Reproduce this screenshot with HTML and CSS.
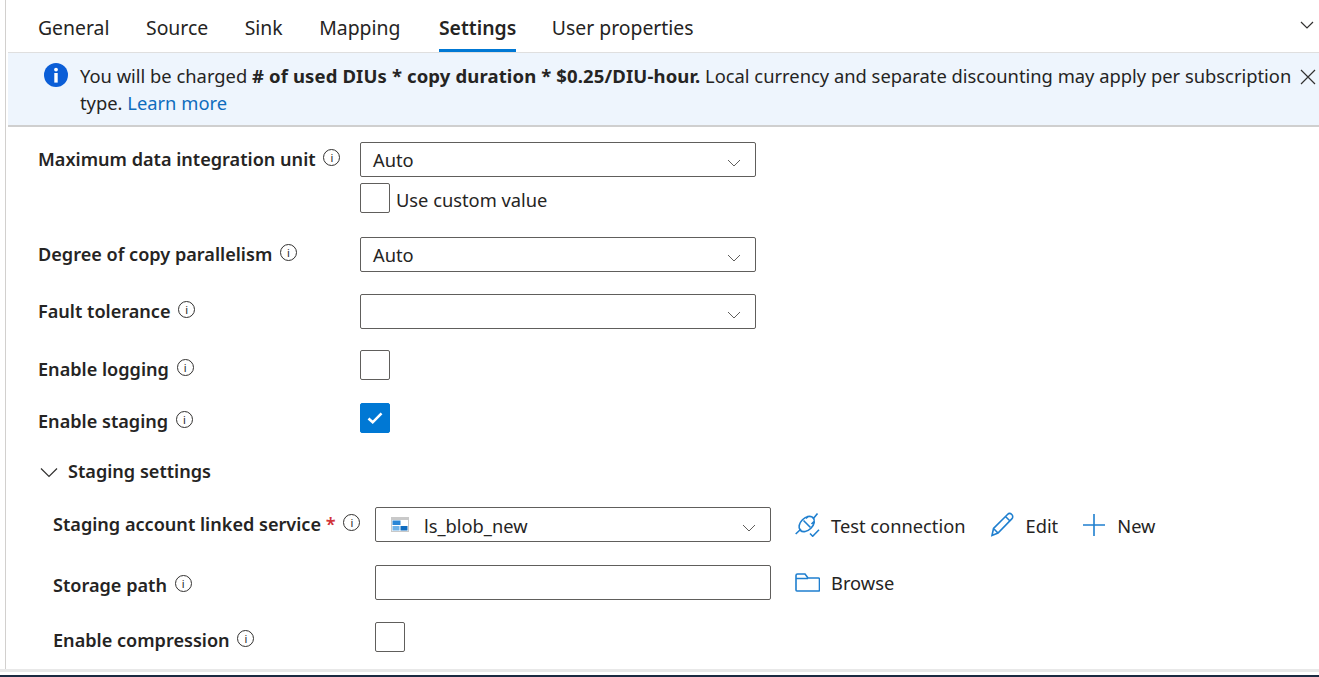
FILE: index.html
```html
<!DOCTYPE html>
<html lang="en">
<head>
    <meta charset="UTF-8">
    <title>Settings</title>
    <link rel="stylesheet" href="styles.css">
</head>
<body>
<section class="main">
    <nav class="tabs">
        <a class="tab">General</a>
        <a class="tab">Source</a>
        <a class="tab">Sink</a>
        <a class="tab">Mapping</a>
        <a class="tab active">Settings</a>
        <a class="tab">User properties</a>
        <svg class="tabs-toggle" width="16" height="10" viewBox="0 0 16 10"><path d="M2 2l6 6 6-6" class="line"/></svg>
    </nav>

    <div class="banner">
        <svg class="banner-icon" width="26" height="26" viewBox="0 0 26 26">
            <circle cx="13" cy="13" r="12" fill="#0b5ed7"/>
            <circle cx="13" cy="7.6" r="1.9" fill="#fff"/>
            <rect x="11.3" y="11" width="3.4" height="9.6" fill="#fff"/>
        </svg>
        <p class="banner-text"><span>You will be charged </span><b># of used DIUs * copy duration * $0.25/DIU-hour.</b><span> Local currency and separate discounting may apply per subscription type. </span><a class="link">Learn more</a></p>
        <svg class="banner-close" width="16" height="16" viewBox="0 0 16 16"><path d="M1 1l14 14M15 1L1 15" class="line"/></svg>
    </div>

    <form class="form">
        <div class="row row-dtu">
            <label class="label">Maximum data integration unit <i class="tip">i</i></label>
            <div class="stack">
                <div class="select"><span>Auto</span><svg class="chev" width="14" height="8" viewBox="0 0 14 8"><path d="M1 1l6 6 6-6" class="line"/></svg></div>
                <div class="check-line"><span class="check"></span><span class="check-text">Use custom value</span></div>
            </div>
        </div>
        <div class="row row-par">
            <label class="label">Degree of copy parallelism <i class="tip">i</i></label>
            <div class="select"><span>Auto</span><svg class="chev" width="14" height="8" viewBox="0 0 14 8"><path d="M1 1l6 6 6-6" class="line"/></svg></div>
        </div>
        <div class="row row-fault">
            <label class="label">Fault tolerance <i class="tip">i</i></label>
            <div class="select"><span></span><svg class="chev" width="14" height="8" viewBox="0 0 14 8"><path d="M1 1l6 6 6-6" class="line"/></svg></div>
        </div>
        <div class="row row-log">
            <label class="label label-low">Enable logging <i class="tip">i</i></label>
            <span class="check"></span>
        </div>
        <div class="row row-stage">
            <label class="label label-mid">Enable staging <i class="tip">i</i></label>
            <span class="check checked"><svg width="16" height="14" viewBox="0 0 16 14"><path d="M1.500 7.500l4.200 3.800 8.800-9" fill="none" stroke="#fff" stroke-width="2.600"/></svg></span>
        </div>

        <div class="section-head">
            <svg width="20" height="11" viewBox="0 0 20 11"><path d="M2 1.500l8 8 8-8" class="line"/></svg>
            <b>Staging settings</b>
        </div>

        <div class="sub">
            <div class="row row-svc">
                <label class="label">Staging account linked service <em class="req">*</em> <i class="tip">i</i></label>
                <div class="select select-svc">
                    <svg class="blob" width="18" height="15" viewBox="0 0 18 15">
                        <rect width="18" height="15" fill="#c9c9c9"/>
                        <rect x="1" y="3" width="16" height="11" fill="#fff"/>
                        <rect x="1.500" y="3.500" width="8" height="4.500" fill="#2a86d6"/>
                        <rect x="1.500" y="9" width="7" height="4.500" fill="#6fb2e8"/>
                        <rect x="9.500" y="9" width="7" height="4.500" fill="#0f6cc0"/>
                    </svg>
                    <span>ls_blob_new</span>
                    <svg class="chev" width="14" height="8" viewBox="0 0 14 8"><path d="M1 1l6 6 6-6" class="line"/></svg>
                </div>
                <div class="actions">
                    <a class="action">
                        <svg width="25" height="24" viewBox="0 0 25 24" class="blue">
                            <ellipse cx="11.700" cy="11" rx="9" ry="6" transform="rotate(-45 11.700 11)"/>
                            <path d="M8.500 7.500l7 7M.7 21l5.300-5M18 6l4.500-5.500M11 5.500l2.500-2.500M16.500 11l2.500-2.500"/>
                            <path d="M15 20.500l2.700 2.700 6.300-6.500"/>
                        </svg>
                        <span>Test connection</span>
                    </a>
                    <a class="action">
                        <svg width="25" height="25" viewBox="0 0 25 25" class="blue">
                            <path d="M2 23.500l1.500-7L17.500 2.500c1.200-1.200 3-1.200 4.300 0s1.200 3.200 0 4.400L8 21z M3.500 16.500L8 21M15.500 4.500l4.500 4.500"/>
                        </svg>
                        <span>Edit</span>
                    </a>
                    <a class="action">
                        <svg width="24" height="24" viewBox="0 0 24 24" class="blue"><path d="M12 1v22M1 12h22"/></svg>
                        <span>New</span>
                    </a>
                </div>
            </div>
            <div class="row row-path">
                <label class="label label-path">Storage path <i class="tip">i</i></label>
                <div class="select select-svc"></div>
                <div class="actions">
                    <a class="action">
                        <svg width="25" height="19" viewBox="0 0 25 19" class="blue"><path d="M1 17V2.500C1 1.700 1.700 1 2.500 1h7.500l3 4h10.500c.8 0 1 .7 1 1.500V17c0 .6-.4 1-1 1H2c-.6 0-1-.4-1-1z M1 5.500h12"/></svg>
                        <span>Browse</span>
                    </a>
                </div>
            </div>
            <div class="row row-comp">
                <label class="label label-mid">Enable compression <i class="tip">i</i></label>
                <span class="check"></span>
            </div>
        </div>
    </form>
</section>
<footer class="bottom"></footer>
</body>
</html>
```

FILE: styles.css
```css
* {
    margin: 0;
    padding: 0;
    box-sizing: border-box;
}
html, body {
    height: 100%;
    overflow: hidden;
}
body {
    background: #fff;
    font-family: "Noto Sans", "Open Sans", sans-serif;
    font-size: 18.300px;
    color: #252423;
    display: flex;
    flex-direction: column;
}
.main {
    height: 669px;
    margin-left: 5px;
    padding-left: 2px;
    border-left: 1px solid #d2d0ce;
    flex: none;
}
.bottom {
    flex: 1;
    border-top: 3px solid #e8e8e8;
    background: linear-gradient(#fff 0 3px, #1b2a41 3px);
}
.line {
    fill: none;
    stroke: #323130;
    stroke-width: 1.200;
}
.blue {
    fill: none;
    stroke: #1f7fcf;
    stroke-width: 1.600;
}

/* tabs */
.tabs {
    display: flex;
    align-items: flex-start;
    gap: 36.500px;
    height: 52px;
    padding-left: 30px;
    position: relative;
}
.tab {
    height: 52px;
    line-height: 56px;
    font-size: 19.400px;
    white-space: nowrap;
}
.tab.active {
    font-weight: 600;
    margin: 0 -1px 0 2px;
    border-bottom: 3px solid #0078d4;
}
.tabs-toggle {
    position: absolute;
    right: 4px;
    top: 20px;
}

/* banner */
.banner {
    display: flex;
    height: 75px;
    background: #eef5fd;
    border-top: 1px solid #dfdfdf;
    border-bottom: 2px solid #cfcfcf;
    position: relative;
    padding: 9px 0 0 35px;
}
.banner-icon {
    flex: none;
    margin-right: 11px;
}
.banner-text {
    width: 1222px;
    line-height: 27px;
    font-size: 18.350px;
}
.banner-text b {
    font-size: 18.500px;
    font-weight: 700;
    letter-spacing: .13px;
}
.banner-close {
    position: absolute;
    right: 3px;
    top: 16px;
}
.link {
    color: #0f6cbd;
}

/* form */
.form {
    padding-left: 30px;
}
.row {
    display: flex;
    align-items: flex-start;
}
.row-dtu { margin-top: 15px; }
.row-par { margin-top: 24px; }
.row-fault { margin-top: 22px; }
.row-log { margin-top: 21px; }
.row-stage { margin-top: 15px; }
.label {
    width: 322px;
    flex: none;
    font-weight: 600;
    font-size: 18.100px;
    line-height: 34px;
    white-space: nowrap;
}
.label-mid {
    line-height: 36px;
}
.label-low {
    line-height: 38px;
}
.label-path {
    line-height: 40px;
}
.tip {
    display: inline-block;
    width: 17px;
    height: 17px;
    margin-left: 3px;
    border: 1px solid #323130;
    border-radius: 50%;
    font: normal 11px/15px "Noto Sans", sans-serif;
    text-align: center;
    vertical-align: 4px;
}
.req {
    color: #d13438;
    font-style: normal;
}
.select {
    width: 396px;
    height: 35px;
    border: 1px solid #605e5c;
    border-radius: 2px;
    display: flex;
    align-items: center;
    padding: 0 14px 0 12px;
    line-height: 33px;
}
.chev {
    margin-left: auto;
    margin-top: 7px;
}
.chev .line {
    stroke: #605e5c;
    stroke-width: 1;
}
.stack {
    width: 396px;
}
.check-line {
    display: flex;
    align-items: center;
    gap: 6px;
    margin-top: 6px;
}
.check-text {
    margin-top: 2px;
}
.check {
    display: flex;
    align-items: center;
    justify-content: center;
    width: 30px;
    height: 30px;
    border: 1px solid #605e5c;
    border-radius: 2px;
    flex: none;
}
.check.checked {
    background: #0078d4;
    border-color: #0078d4;
}
.section-head {
    display: flex;
    align-items: center;
    gap: 9px;
    margin: 18px 0 0 1px;
    height: 28px;
}
.section-head b {
    font-weight: 600;
    font-size: 18.100px;
}
.section-head svg {
    margin-top: 3px;
}
.sub {
    padding-left: 15px;
}
.row-svc { margin-top: 22px; }
.row-svc .select span,
.row-svc .action span {
    margin-top: 2px;
}
.row-path { margin-top: 23px; }
.row-comp { margin-top: 17px; }
.actions {
    display: flex;
    align-items: center;
    height: 35px;
    margin-left: 24px;
    gap: 24px;
}
.action {
    display: flex;
    align-items: center;
    gap: 11px;
}
.select-svc {
    gap: 15px;
    padding-left: 15px;
}
```
